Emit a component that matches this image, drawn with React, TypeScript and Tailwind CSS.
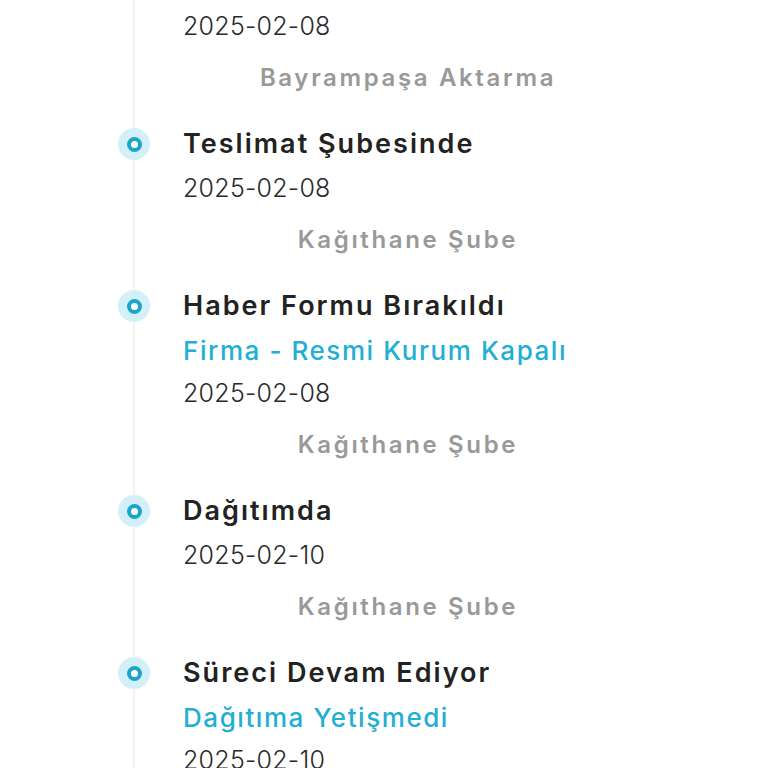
import React from "react";

type Step = {
  title: string;
  note?: string;
  date: string;
  place: string;
};

const steps: Step[] = [
  { title: "Transfer Merkezinde", date: "2025-02-08", place: "Bayrampaşa Aktarma" },
  { title: "Teslimat Şubesinde", date: "2025-02-08", place: "Kağıthane Şube" },
  {
    title: "Haber Formu Bırakıldı",
    note: "Firma - Resmi Kurum Kapalı",
    date: "2025-02-08",
    place: "Kağıthane Şube",
  },
  { title: "Dağıtımda", date: "2025-02-10", place: "Kağıthane Şube" },
  {
    title: "Süreci Devam Ediyor",
    note: "Dağıtıma Yetişmedi",
    date: "2025-02-10",
    place: "Kağıthane Şube",
  },
];

const Dot = () => (
  <div className="-ml-[17px] flex h-8 w-8 shrink-0 items-center justify-center rounded-full bg-[#d3f0f9]">
    <div className="h-[15px] w-[15px] rounded-full border-[4px] border-[#1ba6c9] bg-white" />
  </div>
);

export default function App() {
  return (
    <div
      className="h-[768px] w-[768px] overflow-hidden bg-white"
      style={{ fontFamily: "Inter, 'Noto Sans', sans-serif" }}
    >
      <div className="ml-[133px] -mt-[34px] flex flex-col gap-[30px] border-l-2 border-[#f1f1f1] pb-10">
        {steps.map((s, i) => (
          <div key={i} className="flex">
            <Dot />
            <div className="ml-[33px] flex w-[450px] flex-col">
              <p className="mb-[7px] text-[27px] font-semibold leading-[32px] tracking-[0.075em] text-[#222222]">
                {s.title}
              </p>
              {s.note && (
                <p className="text-[26px] font-medium leading-[43px] tracking-[0.06em] text-[#21afd3]">
                  {s.note}
                </p>
              )}
              <p className="text-[25px] font-light leading-[43px] tracking-[0.01em] text-[#2a2a2a]">
                {s.date}
              </p>
              <p className="mt-[10px] text-center text-[24px] font-semibold leading-[40px] tracking-[0.11em] text-[#999999]">
                {s.place}
              </p>
            </div>
          </div>
        ))}
      </div>
    </div>
  );
}
